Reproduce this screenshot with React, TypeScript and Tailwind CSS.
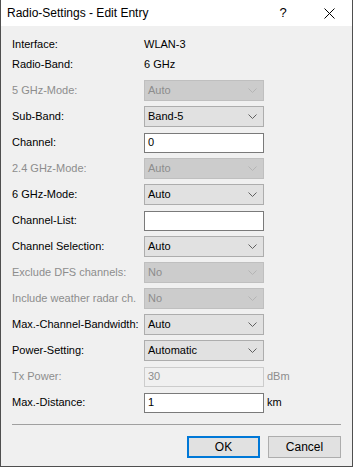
import React from 'react';

type Row =
  | { label: string; kind: 'combo'; value: string; disabled?: boolean }
  | { label: string; kind: 'input'; value: string; disabled?: boolean; unit?: string };

const rows: Row[] = [
  { label: '5 GHz-Mode:', kind: 'combo', value: 'Auto', disabled: true },
  { label: 'Sub-Band:', kind: 'combo', value: 'Band-5' },
  { label: 'Channel:', kind: 'input', value: '0' },
  { label: '2.4 GHz-Mode:', kind: 'combo', value: 'Auto', disabled: true },
  { label: '6 GHz-Mode:', kind: 'combo', value: 'Auto' },
  { label: 'Channel-List:', kind: 'input', value: '' },
  { label: 'Channel Selection:', kind: 'combo', value: 'Auto' },
  { label: 'Exclude DFS channels:', kind: 'combo', value: 'No', disabled: true },
  { label: 'Include weather radar ch.', kind: 'combo', value: 'No', disabled: true },
  { label: 'Max.-Channel-Bandwidth:', kind: 'combo', value: 'Auto' },
  { label: 'Power-Setting:', kind: 'combo', value: 'Automatic' },
  { label: 'Tx Power:', kind: 'input', value: '30', disabled: true, unit: 'dBm' },
  { label: 'Max.-Distance:', kind: 'input', value: '1', unit: 'km' },
];

const Chevron = ({ disabled }: { disabled?: boolean }) => (
  <svg width="9" height="5" viewBox="0 0 9 5" className="shrink-0">
    <path d="M0.5 0.5 L4.5 4.5 L8.5 0.5" fill="none" stroke={disabled ? '#b4b4b4' : '#606060'} strokeWidth="1" />
  </svg>
);

const Combo = ({ value, disabled }: { value: string; disabled?: boolean }) => (
  <div
    className={`w-[120px] h-[21px] flex items-center justify-between pl-[3px] pr-[6px] border ${
      disabled ? 'bg-[#cccccc] border-[#bfbfbf] text-[#8d8d8d]' : 'bg-[#e1e1e1] border-[#adadad] text-black'
    }`}
  >
    <span>{value}</span>
    <Chevron disabled={disabled} />
  </div>
);

const TextInput = ({ value, disabled }: { value: string; disabled?: boolean }) => (
  <div
    className={`w-[120px] h-[20px] flex items-center pl-[3px] border ${
      disabled ? 'bg-[#f0f0f0] border-[#cccccc] text-[#8d8d8d]' : 'bg-white border-[#7a7a7a] text-black'
    }`}
  >
    <span>{value}</span>
  </div>
);

export default function App() {
  return (
    <div
      className="w-[353px] h-[467px] flex flex-col bg-[#f0f0f0] border border-t-0 border-[#4f4f4f] text-[11px] text-black overflow-hidden"
      style={{ fontFamily: '"Liberation Sans", Arial, sans-serif' }}
    >
      {/* Title bar */}
      <div className="h-[26px] bg-white flex items-center shrink-0">
        <span className="pl-[6px] text-[12px] flex-1">Radio-Settings - Edit Entry</span>
        <div className="w-[46px] h-full flex items-center justify-center text-[13px]">?</div>
        <div className="w-[46px] h-full flex items-center justify-center">
          <svg width="11" height="11" viewBox="0 0 11 11">
            <path d="M0.5 0.5 L10.5 10.5 M10.5 0.5 L0.5 10.5" stroke="#000" strokeWidth="1" />
          </svg>
        </div>
      </div>

      {/* Content */}
      <div className="flex flex-col pl-[11px] pr-[11px] pt-[8px]">
        <div className="h-[20px] flex items-center">
          <span className="w-[132px]">Interface:</span>
          <span>WLAN-3</span>
        </div>
        <div className="h-[20px] flex items-center">
          <span className="w-[132px]">Radio-Band:</span>
          <span>6 GHz</span>
        </div>

        <div className="flex flex-col gap-[5px] mt-[6px]">
          {rows.map((r) => (
            <div key={r.label} className="h-[21px] flex items-center">
              <span className={`w-[132px] whitespace-nowrap ${r.disabled ? 'text-[#8d8d8d]' : ''}`}>{r.label}</span>
              {r.kind === 'combo' ? (
                <Combo value={r.value} disabled={r.disabled} />
              ) : (
                <TextInput value={r.value} disabled={r.disabled} />
              )}
              {r.kind === 'input' && r.unit && (
                <span className={`ml-[3px] ${r.disabled ? 'text-[#8d8d8d]' : ''}`}>{r.unit}</span>
              )}
            </div>
          ))}
        </div>

        <div className="h-px bg-[#a0a0a0] mt-[11px]" />

        <div className="flex justify-end gap-[8px] mt-[11px]">
          <button className="w-[73px] h-[22px] bg-[#e1e1e1] border-2 border-[#0078d7] text-[12px]">OK</button>
          <button className="w-[73px] h-[22px] bg-[#e1e1e1] border border-[#adadad] text-[12px]">Cancel</button>
        </div>
      </div>
    </div>
  );
}
